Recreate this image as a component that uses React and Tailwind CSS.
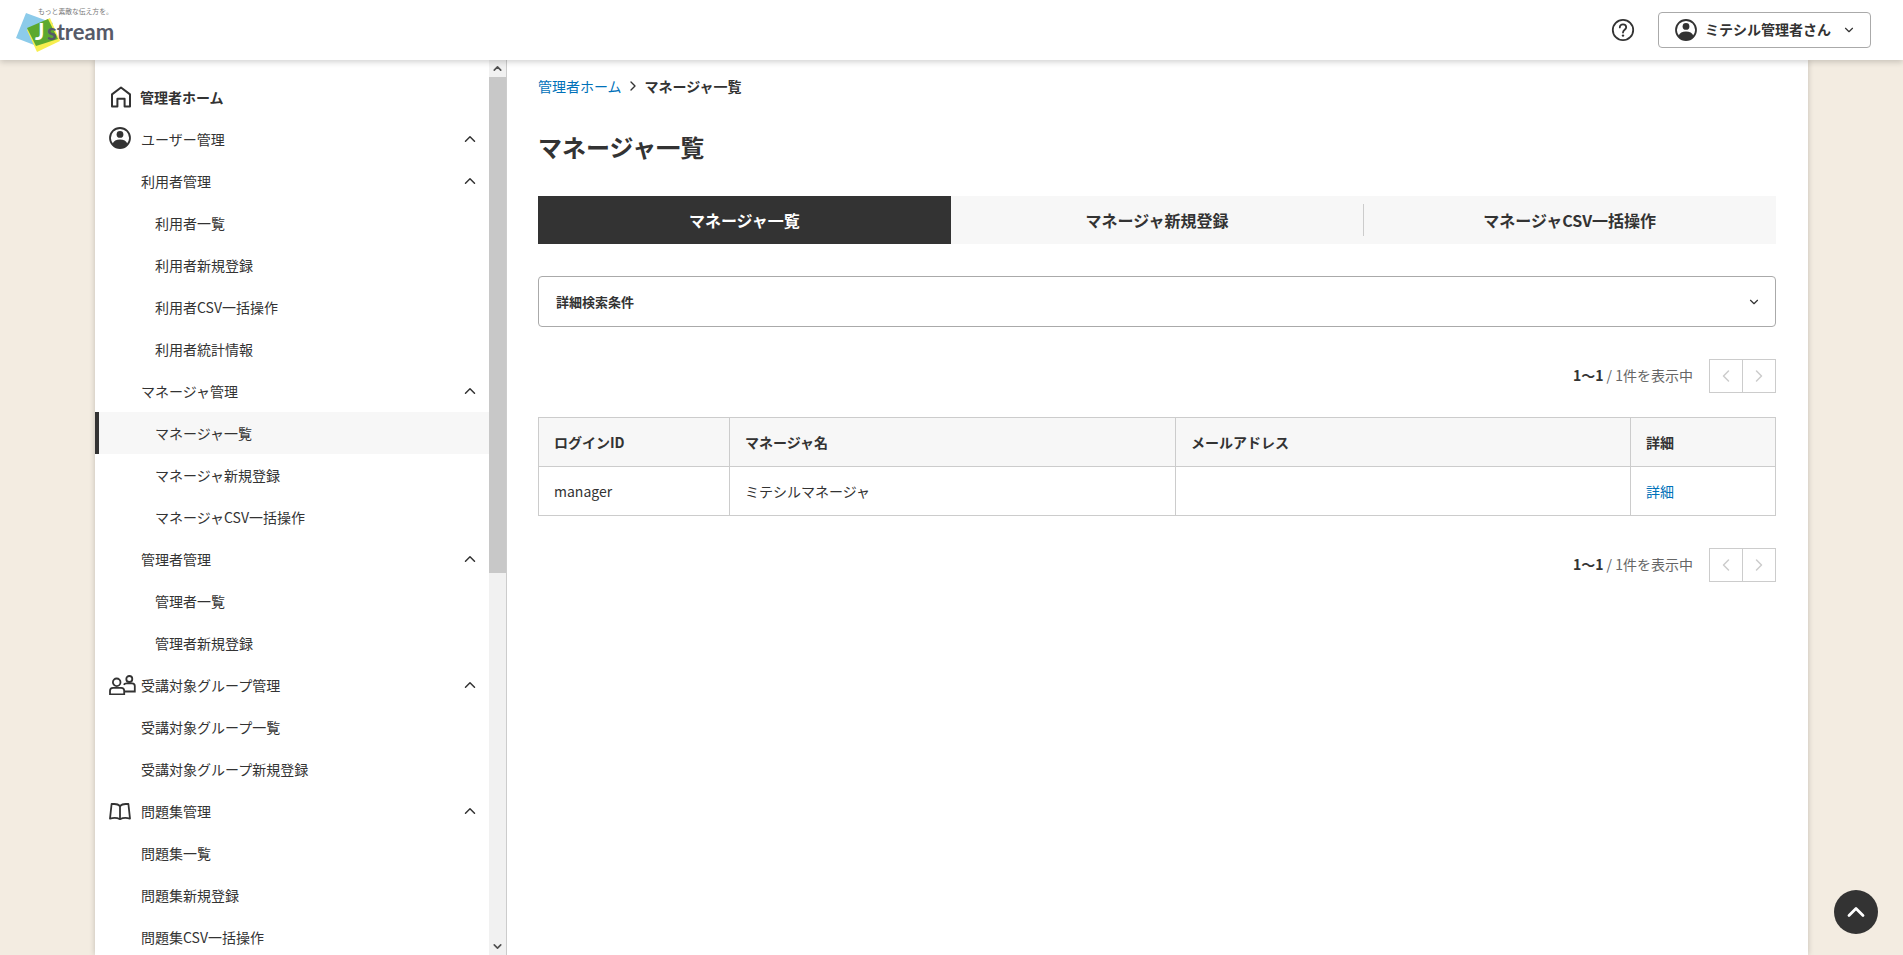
import { ChevronDown, ChevronLeft, ChevronRight, ChevronUp } from "lucide-react";

const menu = [
  { label: "管理者ホーム", level: 0, icon: "home", bold: true },
  { label: "ユーザー管理", level: 1, icon: "user", open: true },
  { label: "利用者管理", level: 1, open: true },
  { label: "利用者一覧", level: 2 },
  { label: "利用者新規登録", level: 2 },
  { label: "利用者CSV一括操作", level: 2 },
  { label: "利用者統計情報", level: 2 },
  { label: "マネージャ管理", level: 1, open: true },
  { label: "マネージャ一覧", level: 2, active: true },
  { label: "マネージャ新規登録", level: 2 },
  { label: "マネージャCSV一括操作", level: 2 },
  { label: "管理者管理", level: 1, open: true },
  { label: "管理者一覧", level: 2 },
  { label: "管理者新規登録", level: 2 },
  { label: "受講対象グループ管理", level: 1, icon: "group", open: true },
  { label: "受講対象グループ一覧", level: 1 },
  { label: "受講対象グループ新規登録", level: 1 },
  { label: "問題集管理", level: 1, icon: "book", open: true },
  { label: "問題集一覧", level: 1 },
  { label: "問題集新規登録", level: 1 },
  { label: "問題集CSV一括操作", level: 1 },
];

function UserIcon({ className }) {
  return (
    <svg viewBox="0 0 22 22" className={className}>
      <circle cx="11" cy="11" r="10" fill="none" stroke="#333" strokeWidth="1.8" />
      <circle cx="11" cy="7.4" r="3.4" fill="#333" />
      <path d="M3.4 17.2C4.600 13.800 7.400 12.400 11 12.400s6.400 1.400 7.600 4.800A10 10 0 0 1 11 20.800a10 10 0 0 1-7.600-3.600z" fill="#333" />
    </svg>
  );
}

function MenuIcon({ type }) {
  if (type === "home") {
    return (
      <svg viewBox="0 0 22 22" className="absolute left-[15px] top-[10px] w-[22px] h-[22px]" fill="none" stroke="#333" strokeWidth="2">
        <path d="M2 20.500V8.400L11 1.500l9 6.900v12.100h-5.400v-7.800H7.400v7.800z" strokeLinejoin="round" />
      </svg>
    );
  }
  if (type === "user") {
    return <UserIcon className="absolute left-[14px] top-[9px] w-[22px] h-[22px]" />;
  }
  if (type === "group") {
    return (
      <svg viewBox="0 0 27 21" className="absolute left-[14px] top-[10px] w-[27px] h-[21px]" fill="none" stroke="#333" strokeWidth="1.8">
        <circle cx="7.700" cy="8.300" r="3.800" />
        <circle cx="20.300" cy="5" r="3" />
        <path d="M1 20.300v-3.600c0-1.700 1.200-2.900 3-2.900h8.200c1.800 0 3 1.200 3 2.900v3.600z" />
        <path d="M16 17.500h9.800V12c0-1.500-1.100-2.700-2.700-2.700h-5.600c-1.200 0-2.200.6-2.700 1.500" />
      </svg>
    );
  }
  if (type === "book") {
    return (
      <svg viewBox="0 0 22 17" className="absolute left-[14px] top-[13px] w-[22px] h-[17px]" fill="none" stroke="#333" strokeWidth="1.8">
        <path d="M11 3C9.600 1.600 7.600 1 5.400 1H2.600L1 15.600c2-.6 7-1 10 .6 3-1.600 8-1.200 10-.6L19.400 1h-2.800C14.400 1 12.400 1.600 11 3z" strokeLinejoin="round" />
        <path d="M11 3v13" />
      </svg>
    );
  }
  return null;
}

function SideItem({ item }) {
  const pad = item.level === 0 ? "pl-[45px]" : item.level === 1 ? "pl-[46px]" : "pl-[60px]";
  return (
    <div className={`relative h-[42px] shrink-0 flex items-center text-[14px] ${pad} ${item.bold ? "font-bold" : ""} ${item.active ? "bg-[#f7f7f7]" : ""}`}>
      {item.active && <div className="absolute left-0 top-0 bottom-0 w-1 bg-[#333]" />}
      <MenuIcon type={item.icon} />
      <span>{item.label}</span>
      {item.open && <ChevronUp className="absolute right-[10px] top-[12px] w-[18px] h-[18px]" strokeWidth={2} color="#333" />}
    </div>
  );
}

function Pager() {
  return (
    <div className="flex items-center justify-end h-[34px]">
      <span className="text-[14px] pb-[2px]">
        <b>1〜1</b>
        <span className="text-[#666]"> / 1件を表示中</span>
      </span>
      <div className="ml-4 flex border border-[#ccc] h-[34px] w-[67px]">
        <div className="flex-1 flex items-center justify-center border-r border-[#ccc]">
          <ChevronLeft className="w-5 h-5" color="#ccc" strokeWidth={1.8} />
        </div>
        <div className="flex-1 flex items-center justify-center">
          <ChevronRight className="w-5 h-5" color="#ccc" strokeWidth={1.8} />
        </div>
      </div>
    </div>
  );
}

export default function App() {
  return (
    <div className="relative h-[955px] overflow-hidden flex flex-col bg-[#f3ece1] text-[#333] font-['Noto_Sans_CJK_JP','Noto_Sans',sans-serif]">
      {/* ヘッダー */}
      <header className="relative z-10 h-[60px] shrink-0 bg-white shadow-[0_2px_6px_rgba(0,0,0,0.18)] flex items-center justify-between">
        <svg viewBox="0 0 120 60" className="w-[120px] h-[60px]">
          <polygon points="26,13 53,23 42,48 16,38" fill="#8ccbea" />
          <polygon points="50,18 60,41 37,52 27,30" fill="#f7ee4e" />
          <polygon points="27,28 48,19 58,39 36,46" fill="#5ca92f" />
          <text x="35" y="40" fontSize="22" fontWeight="700" fill="#fff" fontFamily="Lato, sans-serif">J</text>
          <text x="47" y="40" fontSize="22" fontWeight="700" fill="#565a68" fontFamily="Lato, sans-serif">stream</text>
          <text x="38" y="14" fontSize="6.800" fill="#777">もっと素敵な伝え方を。</text>
        </svg>
        <div className="flex items-center mr-8">
          <svg viewBox="0 0 24 24" className="w-6 h-6 mr-[23px]" fill="none" stroke="#333" strokeWidth="1.8">
            <circle cx="12" cy="12" r="10.200" />
            <path d="M8.800 9.400c0-1.900 1.400-3.100 3.200-3.100s3.200 1.100 3.200 2.900c0 2.500-3.200 2.600-3.200 5.300" strokeLinecap="round" />
            <circle cx="12" cy="17.600" r="1.200" fill="#333" stroke="none" />
          </svg>
          <button className="w-[213px] h-[36px] border border-[#aaa] rounded flex items-center pl-[16px] font-bold text-[14px]">
            <UserIcon className="w-[22px] h-[22px] mr-[8px]" />
            <span className="pb-[2px]">ミテシル管理者さん</span>
            <ChevronDown className="w-[14px] h-[14px] ml-[11px]" strokeWidth={2} color="#333" />
          </button>
        </div>
      </header>

      <div className="flex-1 min-h-0 mx-auto w-[1713px] flex bg-white shadow-[0_0_6px_rgba(0,0,0,0.2)]">
        {/* サイドメニュー */}
        <aside className="w-[412px] shrink-0 flex border-r border-[#ccc]">
          <nav className="flex-1 min-w-0 pt-4 flex flex-col overflow-hidden">
            {menu.map((item) => (
              <SideItem key={item.label} item={item} />
            ))}
          </nav>
          <div className="w-[17px] shrink-0 flex flex-col bg-[#f1f1f1]">
            <div className="h-[17px] flex items-center justify-center">
              <ChevronUp className="w-[13px] h-[13px]" strokeWidth={3} color="#505050" />
            </div>
            <div className="h-[496px] bg-[#c8c8c8]" />
            <div className="flex-1 flex items-end justify-center">
              <ChevronDown className="w-[13px] h-[13px] mb-[2px]" strokeWidth={3} color="#505050" />
            </div>
          </div>
        </aside>

        {/* メイン */}
        <main className="flex-1 min-w-0 pl-[31px] pr-8 pt-4">
          <div className="h-5 flex items-center text-[14px]">
            <a className="text-[#0071b9]">管理者ホーム</a>
            <ChevronRight className="w-4 h-4 ml-[3px] mr-[4px]" strokeWidth={2} color="#333" />
            <b>マネージャ一覧</b>
          </div>
          <h1 className="mt-[35px] h-8 flex items-center text-[24px] font-bold">マネージャ一覧</h1>

          <div className="mt-[33px] grid grid-cols-3 h-12 bg-[#f7f7f7] text-[16px] font-bold">
            <div className="flex items-center justify-center bg-[#333] text-white">マネージャ一覧</div>
            <div className="flex items-center justify-center">マネージャ新規登録</div>
            <div className="relative flex items-center justify-center">
              <div className="absolute left-0 top-2 bottom-2 w-px bg-[#ccc]" />
              マネージャCSV一括操作
            </div>
          </div>

          <div className="mt-8 h-[51px] border border-[#aaa] rounded flex items-center justify-between pl-[17px] pr-[14px] text-[13px] font-bold">
            <span>詳細検索条件</span>
            <ChevronDown className="w-[14px] h-[14px]" strokeWidth={2} color="#333" />
          </div>

          <div className="mt-8">
            <Pager />
          </div>

          <table className="mt-6 w-full table-fixed border-collapse text-[14px]">
            <colgroup>
              <col className="w-[191px]" />
              <col className="w-[446px]" />
              <col className="w-[455px]" />
              <col />
            </colgroup>
            <thead>
              <tr className="h-[49px] bg-[#f7f7f7] font-bold text-left">
                <th className="border border-[#ccc] px-[15px]">ログインID</th>
                <th className="border border-[#ccc] px-[15px]">マネージャ名</th>
                <th className="border border-[#ccc] px-[15px]">メールアドレス</th>
                <th className="border border-[#ccc] px-[15px]">詳細</th>
              </tr>
            </thead>
            <tbody>
              <tr className="h-[49px]">
                <td className="border border-[#ccc] px-[15px]">manager</td>
                <td className="border border-[#ccc] px-[15px]">ミテシルマネージャ</td>
                <td className="border border-[#ccc] px-[15px]"></td>
                <td className="border border-[#ccc] px-[15px] text-[#0071b9]">詳細</td>
              </tr>
            </tbody>
          </table>

          <div className="mt-8">
            <Pager />
          </div>
        </main>
      </div>

      <button className="absolute left-[1834px] top-[890px] w-[44px] h-[44px] rounded-full bg-[#333] flex items-center justify-center">
        <ChevronUp className="w-7 h-7" strokeWidth={2.4} color="#fff" />
      </button>
    </div>
  );
}
